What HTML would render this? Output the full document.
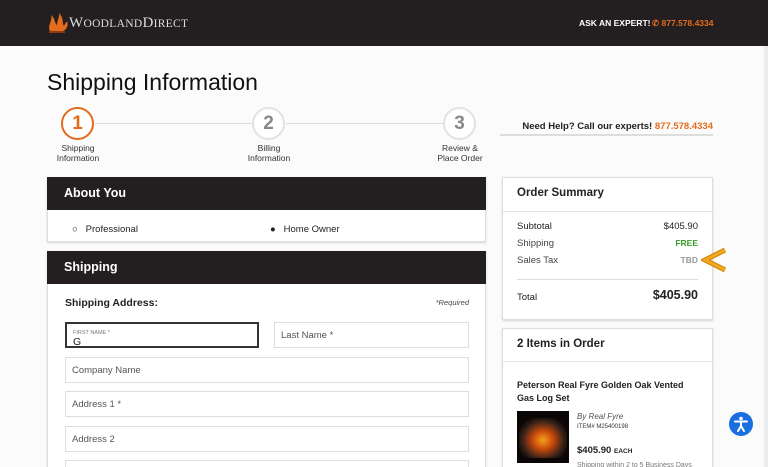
<!DOCTYPE html>
<html><head><style>
*{margin:0;padding:0;box-sizing:border-box}
html,body{width:768px;height:467px;overflow:hidden}
body{background:#fbfbfc;font-family:"Liberation Sans",sans-serif;color:#222;position:relative}
.a{position:absolute}
.hdr{left:0;top:0;width:768px;height:46px;background:#231f20}
.circ{width:33px;height:33px;border-radius:50%;border:2px solid #e2e2e2;background:#fff;text-align:center;line-height:29px;font-size:19px;font-weight:bold;color:#888}
.lbl{font-size:8.5px;color:#333;text-align:center;width:80px;line-height:10px}
.dark{background:#231f20;color:#fff;font-weight:bold;font-size:12.5px;padding-left:17px}
.box{background:#fff;border:1px solid #ddd;box-shadow:0 1px 2px rgba(0,0,0,.15)}
.fld{background:#fff;border:1px solid #ddd;font-size:9.5px;color:#555;padding-left:6px;line-height:25px}
.t{font-size:9.5px}
</style></head><body>
<div class="a hdr"></div>
<svg class="a" style="left:47px;top:13px" width="22" height="21" viewBox="0 0 22 21"><path d="M3 18 C0 12 6 8 4 2 C9 6 7 10 10 12 C10 7 13 4 12 0 C17 5 15 10 17 13 C18 10 20 9 20 8 C22 13 19 17 16 18 Z" fill="#e36b1c"/><rect x="2" y="18" width="16" height="2" fill="#8a3c10"/></svg>
<div class="a" style="left:69px;top:15px;color:#ddd;font-family:'Liberation Serif',serif;font-size:15px;letter-spacing:.3px">W<span style="font-size:11.5px">OODLAND</span>D<span style="font-size:11.5px">IRECT</span></div>
<div class="a" style="left:579px;top:18px;color:#fff;font-size:8.5px;font-weight:bold">ASK AN EXPERT!</div>
<div class="a" style="left:652px;top:18px;color:#e36b1c;font-size:8.5px;font-weight:bold">&#9990; 877.578.4334</div>
<div class="a" style="left:47px;top:69px;font-size:23px;color:#111">Shipping Information</div>
<div class="a" style="left:95px;top:123px;width:160px;height:1px;background:#ddd"></div>
<div class="a" style="left:286px;top:123px;width:160px;height:1px;background:#ddd"></div>
<div class="a circ" style="left:61px;top:107px;border-color:#e36b1c;color:#e36b1c">1</div>
<div class="a circ" style="left:252px;top:107px">2</div>
<div class="a circ" style="left:443px;top:107px">3</div>
<div class="a lbl" style="left:38px;top:143px">Shipping<br>Information</div>
<div class="a lbl" style="left:229px;top:143px">Billing<br>Information</div>
<div class="a lbl" style="left:420px;top:143px">Review &amp;<br>Place Order</div>
<div class="a" style="left:490px;top:121px;width:223px;text-align:right;font-size:9.5px;font-weight:bold">Need Help? Call our experts! <span style="color:#e36b1c">877.578.4334</span></div>
<div class="a" style="left:500px;top:134px;width:213px;height:2px;background:#ddd"></div>

<div class="a box" style="left:47px;top:177px;width:439px;height:65px"></div>
<div class="a dark" style="left:47px;top:177px;width:439px;height:33px;line-height:33px">About You</div>
<div class="a t" style="left:72px;top:224px">○&nbsp;&nbsp;&nbsp;Professional</div>
<div class="a t" style="left:270px;top:224px">●&nbsp;&nbsp;&nbsp;Home Owner</div>
<div class="a box" style="left:47px;top:251px;width:439px;height:230px"></div>
<div class="a dark" style="left:47px;top:251px;width:439px;height:33px;line-height:33px">Shipping</div>
<div class="a" style="left:65px;top:297px;font-size:10.5px;font-weight:bold">Shipping Address:</div>
<div class="a" style="left:410px;top:298px;font-size:7.5px;font-style:italic;color:#444;width:59px;text-align:right">*Required</div>
<div class="a fld" style="left:65px;top:322px;width:194px;height:26px;border:2px solid #333;line-height:9px;padding-top:3px;color:#222"><span style="font-size:5.5px;color:#777">FIRST NAME *</span><br><span style="font-size:10.5px">G</span></div>
<div class="a fld" style="left:274px;top:322px;width:195px;height:26px">Last Name *</div>
<div class="a fld" style="left:65px;top:357px;width:404px;height:26px">Company Name</div>
<div class="a fld" style="left:65px;top:391px;width:404px;height:26px">Address 1 *</div>
<div class="a fld" style="left:65px;top:426px;width:404px;height:26px">Address 2</div>
<div class="a fld" style="left:65px;top:460px;width:404px;height:26px"></div>

<div class="a box" style="left:502px;top:177px;width:211px;height:143px"></div>
<div class="a" style="left:502px;top:211px;width:211px;height:1px;background:#e3e3e3"></div>
<div class="a" style="left:517px;top:187px;font-size:11.5px;font-weight:bold">Order Summary</div>
<div class="a t" style="left:517px;top:221px">Subtotal</div><div class="a t" style="left:630px;top:221px;width:68px;text-align:right">$405.90</div>
<div class="a t" style="left:517px;top:238px;color:#444">Shipping</div><div class="a" style="left:640px;top:238px;width:58px;text-align:right;font-size:8.5px;font-weight:bold;color:#3a9a2a">FREE</div>
<div class="a t" style="left:517px;top:255px;color:#444">Sales Tax</div><div class="a" style="left:640px;top:255px;width:58px;text-align:right;font-size:8.5px;font-weight:bold;color:#999">TBD</div>
<svg class="a" style="left:701px;top:248px" width="26" height="25"><path d="M24 2 L4 12 L24 22" fill="none" stroke="#c98200" stroke-width="5"/><path d="M24 2 L4 12 L24 22" fill="none" stroke="#f5a623" stroke-width="3"/></svg>
<div class="a" style="left:517px;top:279px;width:181px;height:1px;background:#ddd"></div>
<div class="a t" style="left:517px;top:292px">Total</div>
<div class="a" style="left:620px;top:288px;width:78px;text-align:right;font-size:12.5px;font-weight:bold">$405.90</div>

<div class="a box" style="left:502px;top:328px;width:211px;height:150px"></div>
<div class="a" style="left:502px;top:361px;width:211px;height:1px;background:#e3e3e3"></div>
<div class="a" style="left:517px;top:338px;font-size:11.5px;font-weight:bold">2 Items in Order</div>
<div class="a" style="left:517px;top:379px;font-size:9px;font-weight:bold;line-height:12.5px;width:175px">Peterson Real Fyre Golden Oak Vented Gas Log Set</div>
<div class="a" style="left:517px;top:411px;width:52px;height:52px;background:#0a0605"></div>
<div class="a" style="left:519px;top:418px;width:48px;height:40px;background:radial-gradient(ellipse at 50% 55%,#f7a21b 0,#c84a0c 30%,#3a2418 60%,#0a0605 80%)"></div>
<div class="a" style="left:577px;top:412px;font-size:8px;font-style:italic;color:#555">By Real Fyre</div>
<div class="a" style="left:577px;top:424px;font-size:6px;color:#333">ITEM# M25400198</div>
<div class="a" style="left:577px;top:445px;font-size:9.5px;font-weight:bold">$405.90 <span style="font-size:6.5px">EACH</span></div>
<div class="a" style="left:577px;top:462px;font-size:7px;color:#777">Shipping within 2 to 5 Business Days</div>

<div class="a" style="left:729px;top:412px;width:24px;height:24px;border-radius:50%;background:#1a6fe0"></div>
<svg class="a" style="left:729px;top:412px" width="24" height="24"><circle cx="12" cy="6.5" r="1.8" fill="#fff"/><path d="M6 9.5 L18 9.5 M12 9.5 L12 14 M12 14 L9 19 M12 14 L15 19" stroke="#fff" stroke-width="2" fill="none" stroke-linecap="round"/></svg>
<div class="a" style="left:764px;top:46px;width:4px;height:421px;background:#ececec"></div>
</body></html>
